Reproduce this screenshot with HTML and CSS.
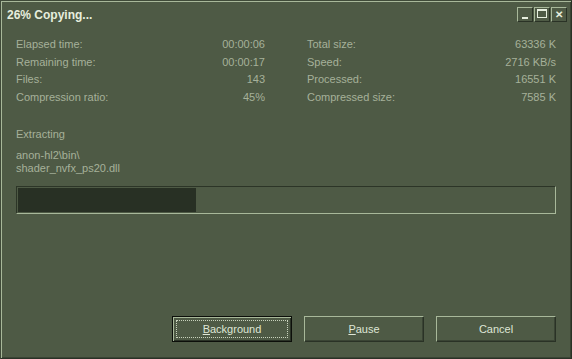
FILE: index.html
```html
<!DOCTYPE html>
<html lang="en">
<head>
    <meta charset="UTF-8">
    <title>26% Copying...</title>
    <link rel="stylesheet" href="styles.css">
</head>
<body>
    <div class="window">
        <div class="titlebar">
            <span class="title">26% Copying...</span>
            <div class="title-buttons">
                <span class="tbtn"><span class="min-glyph"></span></span>
                <span class="tbtn"><span class="max-glyph"></span></span>
                <span class="tbtn close-glyph">&#x2715;</span>
            </div>
        </div>

        <div class="stats">
            <div class="stat-col">
                <div class="stat"><span>Elapsed time:</span><span>00:00:06</span></div>
                <div class="stat"><span>Remaining time:</span><span>00:00:17</span></div>
                <div class="stat"><span>Files:</span><span>143</span></div>
                <div class="stat"><span>Compression ratio:</span><span>45%</span></div>
            </div>
            <div class="stat-col">
                <div class="stat"><span>Total size:</span><span>63336 K</span></div>
                <div class="stat"><span>Speed:</span><span>2716 KB/s</span></div>
                <div class="stat"><span>Processed:</span><span>16551 K</span></div>
                <div class="stat"><span>Compressed size:</span><span>7585 K</span></div>
            </div>
        </div>

        <div class="current">
            <div class="action">Extracting</div>
            <div class="path">anon-hl2\bin\<br>shader_nvfx_ps20.dll</div>
        </div>

        <div class="progress">
            <div class="progress-fill" style="width: 33.3%"></div>
        </div>

        <div class="actions">
            <button class="btn default"><span class="focus"><u>B</u>ackground</span></button>
            <button class="btn"><u>P</u>ause</button>
            <button class="btn">Cancel</button>
        </div>
    </div>
</body>
</html>
```

FILE: styles.css
```css
html, body {
    margin: 0;
    padding: 0;
    background-color: #4e5a45;
}

body {
    font-family: Tahoma, 'Liberation Sans', Arial, sans-serif;
    font-size: 11px;
    color: #a6b19a;
}

.window {
    width: 572px;
    height: 359px;
    box-sizing: border-box;
    background-color: #4e5a45;
    border-top: 1px solid #3f4a38;
    border-left: 1px solid #3f4a38;
    border-right: 1px solid #2a3226;
    border-bottom: 1px solid #2a3226;
    box-shadow: inset 1px 1px 0 #a8b89a, inset -1px -1px 0 #3a4434;
    display: flex;
    flex-direction: column;
}

.titlebar {
    height: 25px;
    display: flex;
    align-items: center;
    justify-content: space-between;
    padding: 1px 4px 0 6px;
}

.title {
    color: #e6eede;
    font-weight: bold;
    font-size: 12px;
}

.title-buttons {
    display: flex;
    gap: 1px;
    margin-top: -1px;
}

.tbtn {
    width: 16px;
    height: 15px;
    box-sizing: border-box;
    border-top: 1px solid #a8b89a;
    border-left: 1px solid #a8b89a;
    border-right: 1px solid #2a3226;
    border-bottom: 1px solid #2a3226;
    position: relative;
    color: #e6eede;
}

.min-glyph {
    position: absolute;
    left: 4px;
    bottom: 2px;
    width: 6px;
    height: 2px;
    background: #e6eede;
}

.max-glyph {
    position: absolute;
    left: 2px;
    top: 1px;
    width: 10px;
    height: 9px;
    box-sizing: border-box;
    border: 1px solid #e6eede;
    border-top-width: 2px;
}

.close-glyph {
    font-size: 10px;
    font-weight: bold;
    line-height: 13px;
    text-align: center;
}

.stats {
    display: flex;
    gap: 42px;
    padding: 9px 15px 0 15px;
}

.stat-col {
    flex: 1;
}

.stat {
    display: flex;
    justify-content: space-between;
    height: 17.7px;
    line-height: 17.7px;
}

.current {
    padding: 21px 15px 0 15px;
}

.action {
    line-height: 13px;
    margin-bottom: 8px;
}

.path {
    line-height: 13px;
}

.progress {
    margin: 11px 15px 0 15px;
    height: 28px;
    box-sizing: border-box;
    border-top: 1px solid #2c3527;
    border-left: 1px solid #2c3527;
    border-right: 1px solid #a8b89a;
    border-bottom: 1px solid #a8b89a;
    padding: 1px;
}

.progress-fill {
    height: 100%;
    background-color: #283024;
}

.actions {
    margin-top: auto;
    margin-bottom: 16px;
    display: flex;
    justify-content: flex-end;
    gap: 12px;
    padding-right: 15px;
}

.btn {
    width: 120px;
    height: 26px;
    box-sizing: border-box;
    background-color: #4e5a45;
    color: #dfe6d6;
    font-family: inherit;
    font-size: 11px;
    border-top: 1px solid #a8b89a;
    border-left: 1px solid #a8b89a;
    border-right: 1px solid #2a3226;
    border-bottom: 1px solid #2a3226;
    box-shadow: inset -1px -1px 0 #3a4434;
    padding: 0;
    cursor: pointer;
}

.btn.default {
    border: 1px solid #0c0f0a;
    box-shadow: inset 1px 1px 0 #a8b89a, inset -1px -1px 0 #2a3226;
    padding: 3px;
}

.focus {
    display: flex;
    align-items: center;
    justify-content: center;
    height: 100%;
    box-sizing: border-box;
    border: 1px dotted #c8d2bc;
}
```
